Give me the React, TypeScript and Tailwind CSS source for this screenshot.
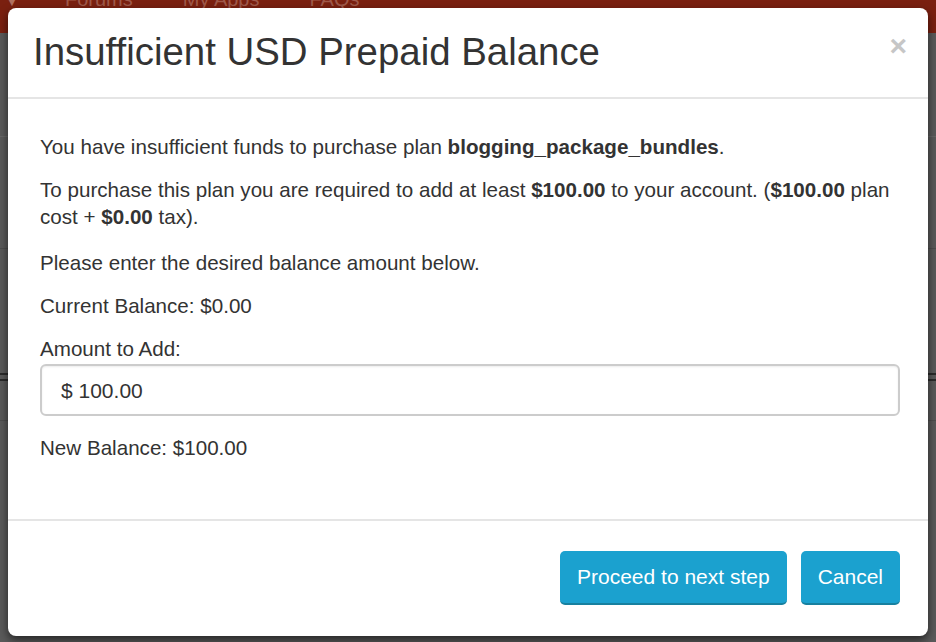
import { FunctionComponent } from "react";

const font = "font-['Liberation_Sans','Helvetica_Neue',Arial,sans-serif]";

const Backdrop: FunctionComponent = () => {
  return (
    <div className="absolute inset-0 flex flex-col">
      <div className="h-[33px] bg-[#7a2010] flex flex-row items-start text-[20px] text-[#a0594a] leading-none">
        <span className="w-[24px] text-[12px] pl-[6px] -mt-[4px] text-[#b07060]">▼</span>
        <span className="ml-[41px] -mt-[11px]">Forums</span>
        <span className="ml-[50px] -mt-[11px]">My Apps</span>
        <span className="ml-[50px] -mt-[11px]">FAQs</span>
      </div>
      <div className="flex-1 bg-[#5a5a5a] flex flex-col">
        <div className="h-[104px] border-b border-[#666]" />
        <div className="h-[112px] border-b border-[#4e4e4e]" />
        <div className="h-[126px] border-b-2 border-[#2a2a2a]" />
        <div className="h-[6px] border-b-2 border-[#2a2a2a]" />
        <div className="h-[40px] border-b border-[#4e4e4e]" />
      </div>
    </div>
  );
};

const App: FunctionComponent = () => {
  return (
    <div className={`relative w-[936px] h-[642px] overflow-hidden bg-[#5a5a5a] ${font}`}>
      <Backdrop />
      <div className="absolute left-[8px] top-[8px] w-[920px] h-[628px] bg-white rounded-[8px] shadow-[0_4px_10px_rgba(0,0,0,0.6)] flex flex-col text-[#333]">
        <div className="h-[91px] shrink-0 border-b-2 border-[#e5e5e5] flex flex-row items-center justify-between pl-[25px] pr-[21px]">
          <h1 className="m-0 text-[38.4px] font-normal leading-none text-[#333] -mt-[1px]">
            Insufficient USD Prepaid Balance
          </h1>
          <button className="text-[30px] font-bold leading-none text-[#c6c6c6] -mt-[13px]">×</button>
        </div>
        <div className="flex-1 pt-[34px] pl-[32px] pr-[28px] text-[20.6px] leading-[27px]">
          <p className="mb-[16px]">
            You have insufficient funds to purchase plan <b>blogging_package_bundles</b>.
          </p>
          <p className="mb-[19px]">
            To purchase this plan you are required to add at least <b>$100.00</b> to your account. (<b>$100.00</b> plan cost + <b>$0.00</b> tax).
          </p>
          <p className="mb-[16px]">Please enter the desired balance amount below.</p>
          <p className="mb-[16px]">Current Balance: $0.00</p>
          <div className="mb-[18px]">
            <div className="mb-[2px]">Amount to Add:</div>
            <div className="h-[52px] w-full border-2 border-[#cccccc] rounded-[6px] shadow-[inset_0_1px_2px_rgba(0,0,0,0.08)] flex items-center pl-[19px] text-[21px]">
              $ 100.00
            </div>
          </div>
          <p>New Balance: $100.00</p>
        </div>
        <div className="h-[117px] shrink-0 border-t-2 border-[#e5e5e5] flex flex-row items-start justify-end gap-[14px] pt-[30px] pr-[28px]">
          <button className="h-[54px] px-[17px] bg-[#1ba1cf] border-b-2 border-[#17809f] rounded-[5px] text-white text-[21px]">
            Proceed to next step
          </button>
          <button className="h-[54px] px-[17px] bg-[#1ba1cf] border-b-2 border-[#17809f] rounded-[5px] text-white text-[21px]">
            Cancel
          </button>
        </div>
      </div>
    </div>
  );
};

export default App;
